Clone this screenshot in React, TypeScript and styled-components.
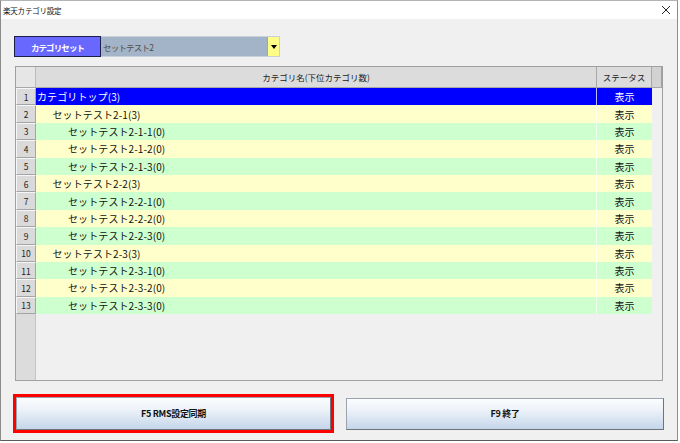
import React from 'react';
import styled, { createGlobalStyle } from 'styled-components';

const GlobalStyle = createGlobalStyle`
  * { box-sizing: border-box; }
  body {
    margin: 0;
    background: #ffffff;
    font-family: "Noto Sans CJK JP", "Liberation Sans", sans-serif;
  }
`;

interface ICategoryRow {
  name: string;
  level: number;
  status: string;
}

const rows: ICategoryRow[] = [
  { name: 'カテゴリトップ(3)', level: 0, status: '表示' },
  { name: 'セットテスト2-1(3)', level: 1, status: '表示' },
  { name: 'セットテスト2-1-1(0)', level: 2, status: '表示' },
  { name: 'セットテスト2-1-2(0)', level: 2, status: '表示' },
  { name: 'セットテスト2-1-3(0)', level: 2, status: '表示' },
  { name: 'セットテスト2-2(3)', level: 1, status: '表示' },
  { name: 'セットテスト2-2-1(0)', level: 2, status: '表示' },
  { name: 'セットテスト2-2-2(0)', level: 2, status: '表示' },
  { name: 'セットテスト2-2-3(0)', level: 2, status: '表示' },
  { name: 'セットテスト2-3(3)', level: 1, status: '表示' },
  { name: 'セットテスト2-3-1(0)', level: 2, status: '表示' },
  { name: 'セットテスト2-3-2(0)', level: 2, status: '表示' },
  { name: 'セットテスト2-3-3(0)', level: 2, status: '表示' },
];

const SELECTED_ROW = 0;

const App = () => {
  return (
    <>
      <GlobalStyle />
      <Window>
        <TitleBar>
          <TitleText>楽天カテゴリ設定</TitleText>
          <CloseIcon width="10" height="10" viewBox="0 0 10 10">
            <path d="M1 1 L9 9 M9 1 L1 9" stroke="#222" strokeWidth="1" />
          </CloseIcon>
        </TitleBar>

        <Body>
          <SelectorRow>
            <SelectorLabel>カテゴリセット</SelectorLabel>
            <Combo>
              <ComboText>セットテスト2</ComboText>
              <ComboButton>
                <svg width="6" height="4" viewBox="0 0 6 4">
                  <path d="M0 0 L6 0 L3 4 Z" fill="#000" />
                </svg>
              </ComboButton>
            </Combo>
          </SelectorRow>

          <Grid>
            <HeaderRow>
              <HeaderCorner />
              <HeaderCell $width={561}>カテゴリ名(下位カテゴリ数)</HeaderCell>
              <HeaderCell $width={55}>ステータス</HeaderCell>
              <HeaderFiller />
            </HeaderRow>

            {rows.map((row, index) => {
              const selected = index === SELECTED_ROW;
              const tone = selected ? 'selected' : index % 2 === 1 ? 'yellow' : 'green';
              return (
                <DataRow key={index}>
                  <RowHeader>{index + 1}</RowHeader>
                  <NameCell $tone={tone} $level={row.level}>
                    {row.name}
                  </NameCell>
                  <StatusCell $tone={tone}>{row.status}</StatusCell>
                </DataRow>
              );
            })}

            <EmptyArea>
              <RowHeaderFill />
            </EmptyArea>
          </Grid>

          <ButtonRow>
            <FocusFrame>
              <ActionButton>F5 RMS設定同期</ActionButton>
            </FocusFrame>
            <ActionButton $width={318}>F9 終了</ActionButton>
          </ButtonRow>
        </Body>
      </Window>
    </>
  );
};

type Tone = 'selected' | 'yellow' | 'green';

const toneBg: Record<Tone, string> = {
  selected: '#0000ff',
  yellow: '#ffffcc',
  green: '#ceffce',
};

const Window = styled.div`
  width: 678px;
  height: 441px;
  display: flex;
  flex-direction: column;
  border-top: 1px solid #b4b4b4;
  border-left: 1px solid #8c8c8c;
  border-right: 1px solid #8c8c8c;
  border-bottom: 1px solid #5a5a5a;
  background: #f0f0f0;
`;

const TitleBar = styled.div`
  height: 18px;
  display: flex;
  align-items: center;
  justify-content: space-between;
  padding: 0 6px 0 2px;
  background: #ffffff;
`;

const TitleText = styled.span`
  font-size: 7.5px;
  color: #111;
  letter-spacing: -0.2px;
`;

const CloseIcon = styled.svg`
  display: block;
`;

const Body = styled.div`
  flex: 1;
  display: flex;
  flex-direction: column;
  padding: 17px 0 0 12px;
`;

const SelectorRow = styled.div`
  display: flex;
  height: 21px;
  margin-left: 1px;
`;

const SelectorLabel = styled.div`
  width: 87px;
  display: flex;
  align-items: center;
  justify-content: center;
  background: #6868ff;
  border: 1px solid #1e1e4a;
  color: #ffffff;
  font-size: 8.5px;
  font-weight: 700;
  letter-spacing: -0.9px;
`;

const Combo = styled.div`
  width: 179px;
  display: flex;
  align-items: center;
  background: #a4b4c8;
  border: 1px solid #c8d0da;
  border-left: none;
`;

const ComboText = styled.span`
  flex: 1;
  padding-left: 2px;
  font-size: 8.5px;
  letter-spacing: -0.8px;
  color: #505050;
`;

const ComboButton = styled.div`
  width: 12px;
  height: 100%;
  display: flex;
  align-items: center;
  justify-content: center;
  background: #ffff88;
  border-left: 1px solid #9aa6b4;
`;

const Grid = styled.div`
  width: 648px;
  height: 315px;
  margin: 9px 0 0 2px;
  display: flex;
  flex-direction: column;
  border: 1px solid #a0a0a0;
  background: #f0f0f0;
  overflow: hidden;
`;

const HeaderRow = styled.div`
  display: flex;
  height: 21px;
  flex-shrink: 0;
  background: #dcdcdc;
  border-bottom: 1px solid #a8a8a8;
`;

const HeaderCorner = styled.div`
  width: 20px;
  background: #e6e6e6;
  border-right: 1px solid #bcbcbc;
`;

const HeaderCell = styled.div<{ $width: number }>`
  width: ${(p) => p.$width}px;
  display: flex;
  align-items: center;
  justify-content: center;
  border-right: 1px solid #a8a8a8;
  font-size: 8.5px;
  color: #222;
`;

const HeaderFiller = styled.div`
  width: 10px;
  background: #d2d2d2;
  border-right: 1px solid #a0a0a0;
`;

const DataRow = styled.div`
  display: flex;
  height: 17.4px;
  flex-shrink: 0;
`;

const RowHeader = styled.div`
  width: 20px;
  display: flex;
  align-items: center;
  justify-content: center;
  background: #dadada;
  border-top: 1px solid #f6f6f6;
  border-left: 1px solid #f6f6f6;
  border-right: 1px solid #a4a4a4;
  border-bottom: 1px solid #a4a4a4;
  font-size: 8.5px;
  color: #222;
`;

const NameCell = styled.div<{ $tone: Tone; $level: number }>`
  width: 561px;
  display: flex;
  align-items: center;
  padding-left: ${(p) => 1 + p.$level * 15.5}px;
  background: ${(p) => toneBg[p.$tone]};
  color: ${(p) => (p.$tone === 'selected' ? '#ffffff' : '#111')};
  border-right: 1px solid rgba(255, 255, 255, 0.75);
  font-size: 10px;
  letter-spacing: 0.1px;
  white-space: nowrap;
`;

const StatusCell = styled.div<{ $tone: Tone }>`
  width: 55px;
  display: flex;
  align-items: center;
  justify-content: center;
  background: ${(p) => toneBg[p.$tone]};
  color: ${(p) => (p.$tone === 'selected' ? '#ffffff' : '#111')};
  font-size: 10px;
`;

const EmptyArea = styled.div`
  flex: 1;
  display: flex;
`;

const RowHeaderFill = styled.div`
  width: 20px;
  background: #dcdcdc;
  border-right: 1px solid #c4c4c4;
`;

const ButtonRow = styled.div`
  display: flex;
  align-items: center;
  gap: 12px;
  margin-top: 13px;
`;

const FocusFrame = styled.div`
  width: 321px;
  height: 39px;
  border: 3px solid #ff0000;
  display: flex;
`;

const ActionButton = styled.button<{ $width?: number }>`
  width: ${(p) => (p.$width ? `${p.$width}px` : '100%')};
  height: ${(p) => (p.$width ? '32px' : '100%')};
  display: flex;
  align-items: center;
  justify-content: center;
  padding: 0;
  background: linear-gradient(to bottom, #fbfcfe 0%, #eef3f9 35%, #c4d6ea 100%);
  border: 1px solid #9aa4ae;
  border-right-color: #6e747a;
  border-bottom-color: #6e747a;
  font-family: "Noto Sans CJK JP", "Liberation Sans", sans-serif;
  font-size: 9px;
  font-weight: 700;
  color: #111;
  letter-spacing: -0.3px;
`;

export default App;
